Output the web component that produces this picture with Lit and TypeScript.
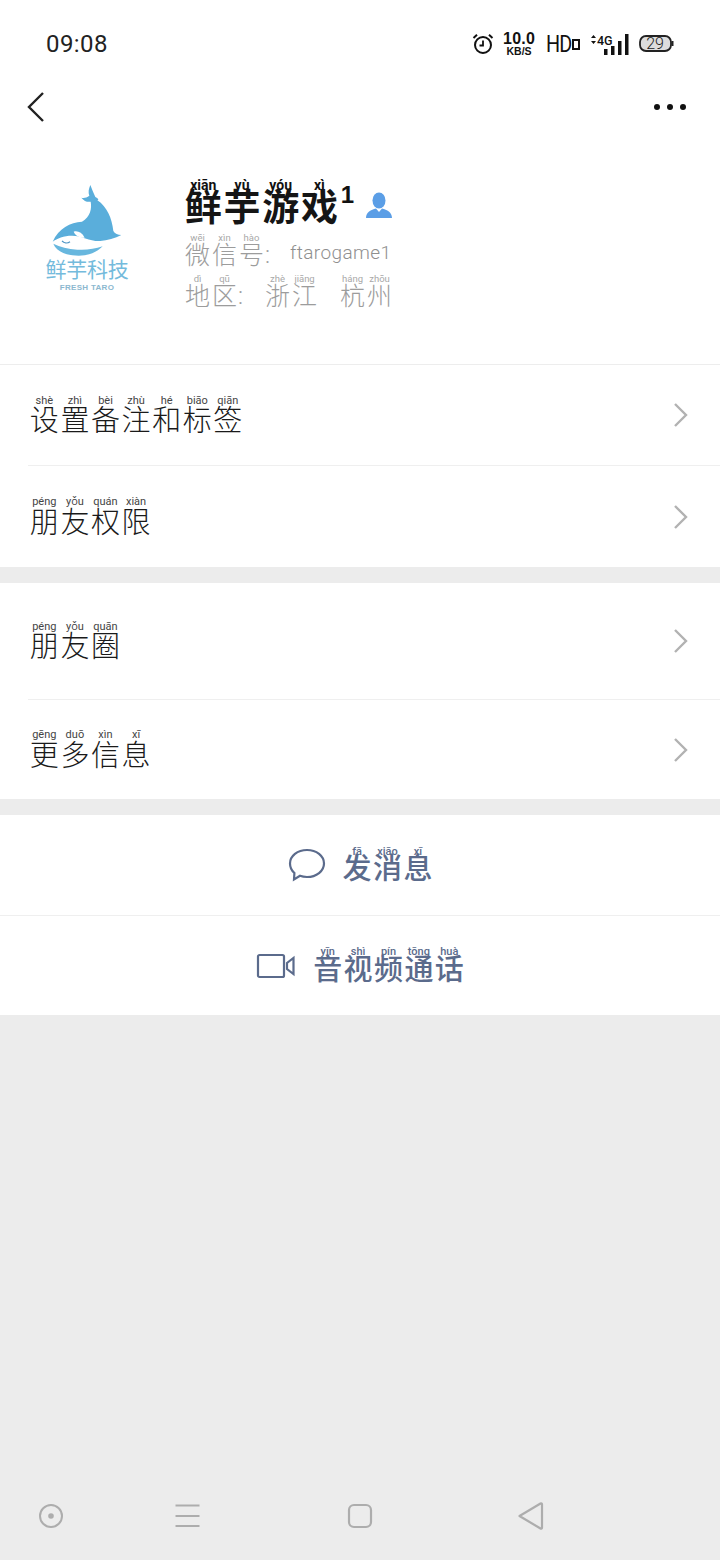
import { LitElement, html, css } from "lit";
import { customElement } from "lit/decorators.js";

type Pair = [string, string];
const pairs = (h: string, p: string): Pair[] => {
  const py = p.split(" ");
  return Array.from(h).map((c, i) => [c, py[i] ?? ""] as Pair);
};
const ruby = (items: Pair[], cls: string) => html`<span class="ruby ${cls}">${items.map(
  ([c, p]) => html`<span class="cell"><span class="py">${p}</span><span class="hz">${c}</span></span>`
)}</span>`;

const chevron = html`<svg class="chev" viewBox="0 0 16 26" width="16" height="26"><path d="M2 2l11 11L2 24" fill="none" stroke="#b2b2b2" stroke-width="2.4"/></svg>`;

@customElement("app-root")
export class AppRoot extends LitElement {
  static styles = css`
    :host { display: block; width: 720px; height: 1560px; background: #ececec; position: relative; overflow: hidden;
      font-family: "Noto Sans CJK SC", "Noto Sans", sans-serif; color: #1d1d1d; }
    .top { background: #fff; }
    .status { height: 88px; display: flex; align-items: center; justify-content: space-between; padding: 0 46px; box-sizing: border-box; }
    .time { font: 400 24px Roboto, sans-serif; color: #222; letter-spacing: .4px; }
    .sicons { display: flex; align-items: center; color: #111; margin-left: auto; }
    .speed { display: flex; flex-direction: column; align-items: center; margin: 0 11px 0 9px; font-family: "Liberation Sans", sans-serif; font-weight: 700; line-height: 1; }
    .speed b { font-size: 16px; letter-spacing: .2px; height: 14px; line-height: 14px; }
    .speed i { font-style: normal; font-size: 10.5px; }
    .hd { font: 400 23px/1 Roboto, sans-serif; transform: scaleX(.86); transform-origin: left center; width: 26px; letter-spacing: -1px; }
    .hdbox { margin: 0 9px 1px 0; }
    .sig { margin-right: 10px; }
    .nav { height: 38px; display: flex; align-items: center; justify-content: space-between; padding: 0 34px 0 26px; }
    .dots { display: flex; gap: 7px; }
    .dots span { width: 6px; height: 6px; border-radius: 50%; background: #111; }
    .profile { height: 239px; box-sizing: border-box; padding: 52px 0 0 45px; display: flex; border-bottom: 1px solid #ededed; }
    .logo { width: 84px; display: flex; flex-direction: column; align-items: center; margin-top: 7px; margin-right: 55px; }
    .logo .cn { font-size: 21px; line-height: 24px; letter-spacing: -.3px; color: #74bbdc; white-space: nowrap; }
    .logo .en { font: 700 8px/12px "Liberation Sans", sans-serif; color: #8cb8cf; letter-spacing: .3px; white-space: nowrap; margin-top: 2px; }
    .info { display: flex; flex-direction: column; align-items: flex-start; }
    .ruby { display: inline-flex; }
    .cell { display: flex; flex-direction: column; align-items: center; }
    .py { font-family: Roboto, "Open Sans", sans-serif; font-weight: 400; white-space: nowrap; }
    .hz { display: block; }
    .nameline { display: flex; align-items: flex-start; height: 55px; }
    .title .cell { width: 38.7px; }
    .title .py { font-size: 14px; line-height: 14px; font-weight: 700; color: #111; }
    .title .hz { font-size: 37px; line-height: 40px; margin-top: -7px; font-weight: 700; color: #151515; }
    .sup { font: 700 24px/24px "Liberation Sans", sans-serif; margin: 5px 11px 0 2px; color: #111; }
    .person { margin-top: 14px; }
    .line { display: flex; align-items: flex-start; height: 41px; color: #a3a3a3; }
    .sub .cell { width: 27px; }
    .sub .py { font-size: 9.5px; line-height: 10px; color: #a8a8a8; }
    .sub .hz { font-size: 25px; line-height: 30px; margin-top: -5px; color: #9c9c9c; font-weight: 300; }
    .colon { font: 300 24px/30px Roboto, sans-serif; margin-top: 7px; color: #a0a0a0; }
    .wx { font: 300 19px/30px Roboto, sans-serif; color: #8f8f8f; margin: 5px 0 0 20px; letter-spacing: .4px; }
    .sp1 { width: 21px; }
    .sp2 { width: 21px; }
    .group { background: #fff; }
    .row { display: flex; align-items: center; justify-content: space-between; box-sizing: border-box; padding: 0 31px 0 29px; }
    .row.a { height: 100px; }
    .row.b { height: 101px; }
    .row.c { height: 116px; }
    .row.d { height: 99px; }
    .sep { height: 1px; background: #efefef; margin-left: 28px; }
    .sep.full { margin-left: 0; }
    .gap { height: 16px; background: #ececec; }
    .label .cell { width: 30.6px; }
    .label .py { font-size: 11px; line-height: 12px; color: #444; }
    .label .hz { font-size: 29px; line-height: 33px; margin-top: -4.5px; color: #1a1a1a; font-weight: 300; }
    .action { height: 100px; display: flex; align-items: center; justify-content: center; color: #5b6b8c; }
    .action.last { height: 99px; }
    .act { margin-bottom: 1px; }
    .act .cell { width: 30.4px; }
    .act .py { font-size: 11px; line-height: 12px; font-weight: 500; color: #5b6b8c; }
    .act .hz { font-size: 29px; line-height: 33px; margin-top: -7.5px; color: #5b6b8c; font-weight: 500; }
    .msg { margin-right: 16px; margin-left: 1px; }
    .vid { margin-right: 17px; }
    .bottom { position: absolute; left: 0; right: 0; top: 1498px; height: 36px; }
    .bottom svg { position: absolute; top: 0; }
    .nav0 { left: 37px; }
    .nav1 { left: 174px; }
    .nav2 { left: 346px; }
    .nav3 { left: 516px; }
  `;

  render() {
    return html`
      <div class="top">
        <div class="status">
          <span class="time">09:08</span>
          <div class="sicons">
            <svg class="alarm" width="22" height="22" viewBox="0 0 22 22" fill="none" stroke="#111" stroke-width="2"><circle cx="11" cy="12" r="8"/><path d="M11 7.500V12.500H7.500" stroke-width="1.800"/><path d="M1.500 5L5 1.800M20.500 5L17 1.800"/></svg>
            <span class="speed"><b>10.0</b><i>KB/S</i></span>
            <span class="hd">HD</span>
            <svg class="hdbox" width="8" height="13" viewBox="0 0 8 13"><rect x="1" y="3" width="6" height="9" fill="none" stroke="#111" stroke-width="2"/></svg>
            <svg class="sig" width="40" height="24" viewBox="0 0 40 24"><path d="M2 6l2.500-3L7 6zM2 9l2.500 3L7 9z" fill="#111"/><text x="8" y="13" font-family="Roboto" font-size="12.500" font-weight="500" fill="#111">4G</text><rect x="15" y="17" width="3.500" height="6" fill="#111"/><rect x="22" y="14" width="3.500" height="9" fill="#111"/><rect x="29" y="9" width="3.500" height="14" fill="#111"/><rect x="36" y="2" width="3.500" height="21" fill="#111"/></svg>
            <svg width="35" height="20" viewBox="0 0 35 20"><rect x="1" y="2" width="31" height="15" rx="6" fill="#ddd" stroke="#222" stroke-width="1.800"/><path d="M33.500 7v5" stroke="#222" stroke-width="2"/><text x="16" y="15" text-anchor="middle" font-family="Roboto" font-size="16" font-weight="300" fill="#222">29</text></svg>
          </div>
        </div>
        <div class="nav">
          <svg width="20" height="32" viewBox="0 0 20 32"><path d="M17 2L3 16l14 14" fill="none" stroke="#222" stroke-width="2.400"/></svg>
          <div class="dots"><span></span><span></span><span></span></div>
        </div>
        <div class="profile">
          <div class="logo">
            <svg width="70" height="71" viewBox="70 30 210 213">
              <path fill="#5aaedb" d="M185 30C180 42 178 52 182 62C174 68 166 70 158 68C166 78 176 82 186 80C190 100 185 125 160 140C125 142 90 160 72 200C85 190 105 182 130 182C160 182 185 200 215 198C235 196 260 190 278 180C268 180 258 176 254 168C250 130 235 95 206 76C212 74 208 70 200 66C194 54 190 42 185 30Z"/>
              <path fill="#fff" d="M135 170C146 166 160 172 168 188C154 190 140 182 135 170Z"/>
              <path fill="none" stroke="#4d94c4" stroke-width="3.500" d="M100 198C106 204 116 206 124 200"/>
              <path fill="#68b7de" d="M74 206C84 232 118 242 150 242C180 242 205 232 222 214C198 222 172 226 146 224C118 222 94 216 74 206Z"/>
            </svg>
            <span class="cn">鲜芋科技</span>
            <span class="en">FRESH TARO</span>
          </div>
          <div class="info">
            <div class="nameline">
              ${ruby(pairs("鲜芋游戏", "xiān yù yóu xì"), "title")}
              <span class="sup">1</span>
              <svg class="person" width="28" height="26" viewBox="0 0 28 26" fill="#5b9ee6"><ellipse cx="14" cy="8.500" rx="6.500" ry="8"/><path d="M1 26c0-6 5-8 10-9.500l3 3.500 3-3.500c5 1.500 10 3.500 10 9.500z"/></svg>
            </div>
            <div class="line">
              ${ruby(pairs("微信号", "wēi xìn hào"), "sub")}<span class="colon">:</span><span class="wx">ftarogame1</span>
            </div>
            <div class="line">
              ${ruby(pairs("地区", "dì qū"), "sub")}<span class="colon">:</span>
              <span class="sp1"></span>
              ${ruby(pairs("浙江", "zhè jiāng"), "sub")}
              <span class="sp2"></span>
              ${ruby(pairs("杭州", "háng zhōu"), "sub")}
            </div>
          </div>
        </div>
      </div>
      <div class="group">
        <div class="row a">${ruby(pairs("设置备注和标签", "shè zhì bèi zhù hé biāo qiān"), "label")}${chevron}</div>
        <div class="sep"></div>
        <div class="row b">${ruby(pairs("朋友权限", "péng yǒu quán xiàn"), "label")}${chevron}</div>
      </div>
      <div class="gap"></div>
      <div class="group">
        <div class="row c">${ruby(pairs("朋友圈", "péng yǒu quān"), "label")}${chevron}</div>
        <div class="sep"></div>
        <div class="row d">${ruby(pairs("更多信息", "gēng duō xìn xī"), "label")}${chevron}</div>
      </div>
      <div class="gap"></div>
      <div class="group">
        <div class="action">
          <svg class="msg" width="38" height="34" viewBox="0 0 38 34" fill="none" stroke="#5b6b8c" stroke-width="2.200"><path d="M19 2c9.500 0 17 6 17 13.500S28.500 29 19 29c-2.500 0-5-.4-7-1.200L6 31.500l.4-6.500C3.500 22.500 2 19.200 2 15.500 2 8 9.500 2 19 2z"/></svg>
          ${ruby(pairs("发消息", "fā xiāo xī"), "act")}
        </div>
        <div class="sep full"></div>
        <div class="action last">
          <svg class="vid" width="40" height="26" viewBox="0 0 40 26" fill="none" stroke="#5b6b8c" stroke-width="2.200"><rect x="2" y="2" width="26" height="22" rx="1.500"/><path d="M37.500 5v16L31 16v-6z"/></svg>
          ${ruby(pairs("音视频通话", "yīn shì pín tōng huà"), "act")}
        </div>
      </div>
      <div class="bottom">
        <svg class="nav0" width="28" height="36" viewBox="0 0 28 36"><circle cx="14" cy="18" r="11" fill="none" stroke="#adadad" stroke-width="2"/><circle cx="14" cy="18" r="2.800" fill="#adadad"/></svg>
        <svg class="nav1" width="28" height="36" viewBox="0 0 28 36"><path d="M1.500 7.500h24M1.500 18h24M1.500 28h24" stroke="#adadad" stroke-width="2"/></svg>
        <svg class="nav2" width="28" height="36" viewBox="0 0 28 36"><rect x="3" y="7" width="22" height="22" rx="5" fill="none" stroke="#adadad" stroke-width="2.200"/></svg>
        <svg class="nav3" width="28" height="36" viewBox="0 0 28 36"><path d="M3.500 18L24.500 5.500a1 1 0 0 1 1.500 1v23a1 1 0 0 1-1.500 1z" fill="none" stroke="#adadad" stroke-width="2.200" stroke-linejoin="round"/></svg>
      </div>
    `;
  }
}
